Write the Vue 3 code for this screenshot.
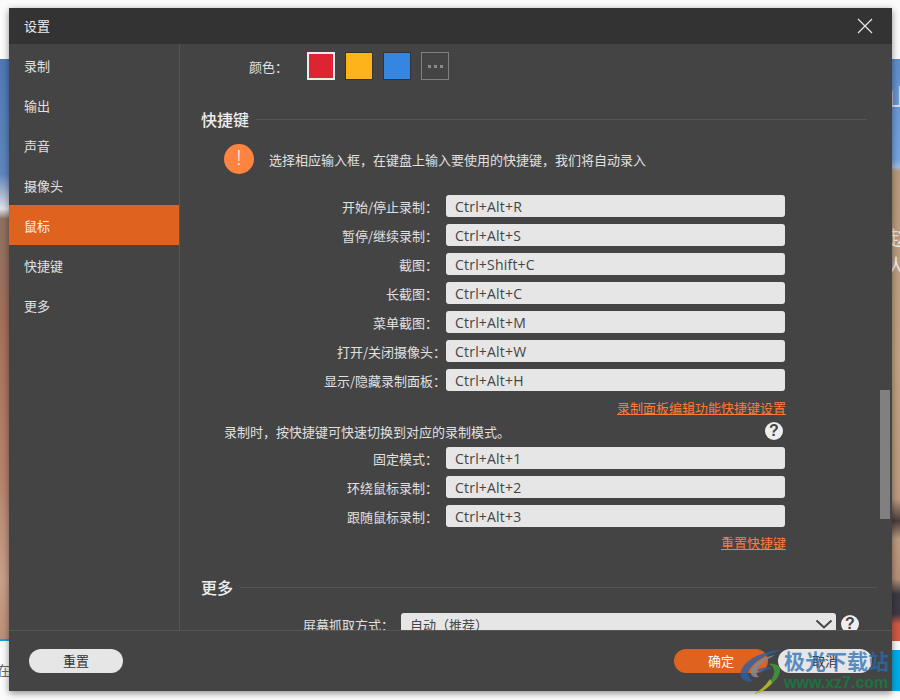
<script setup>
const navItems = ['录制', '输出', '声音', '摄像头', '鼠标', '快捷键', '更多']
const mainKeys = [
  { label: '开始/停止录制：', value: 'Ctrl+Alt+R' },
  { label: '暂停/继续录制：', value: 'Ctrl+Alt+S' },
  { label: '截图：', value: 'Ctrl+Shift+C' },
  { label: '长截图：', value: 'Ctrl+Alt+C' },
  { label: '菜单截图：', value: 'Ctrl+Alt+M' },
  { label: '打开/关闭摄像头：', value: 'Ctrl+Alt+W', wide: true },
  { label: '显示/隐藏录制面板：', value: 'Ctrl+Alt+H', wide: true }
]
const modeKeys = [
  { label: '固定模式：', value: 'Ctrl+Alt+1' },
  { label: '环绕鼠标录制：', value: 'Ctrl+Alt+2' },
  { label: '跟随鼠标录制：', value: 'Ctrl+Alt+3' }
]
</script>

<template>
  <div class="page">
    <div class="backdrop">
      <div class="photo-left"></div>
      <div class="photo-right"></div>
      <div class="bar-left"></div>
      <div class="bar-right"></div>
      <span class="bg-text bg-left">在</span>
      <span class="bg-text bg-r1">山</span>
      <span class="bg-text bg-r2">赵</span>
      <span class="bg-text bg-r3">人</span>
    </div>

    <div class="dialog">
      <header class="titlebar">
        <span>设置</span>
        <svg class="close" width="16" height="16" viewBox="0 0 16 16">
          <path d="M1 1 L15 15 M15 1 L1 15" stroke="#e8e8e8" stroke-width="1.2" fill="none" />
        </svg>
      </header>

      <div class="main">
        <nav class="sidebar">
          <div v-for="item in navItems" :key="item" class="nav-item" :class="{ active: item === '鼠标' }">{{ item }}</div>
        </nav>

        <section class="content">
          <div class="colors">
            <span class="colors-label">颜色：</span>
            <div class="swatches">
              <span class="swatch red"></span>
              <span class="swatch yellow"></span>
              <span class="swatch blue"></span>
              <span class="swatch more"><i></i><i></i><i></i></span>
            </div>
          </div>

          <div class="heading first"><span>快捷键</span><b></b></div>

          <div class="notice">
            <span class="alert">!</span>
            <span>选择相应输入框，在键盘上输入要使用的快捷键，我们将自动录入</span>
          </div>

          <div class="rows">
            <div v-for="k in mainKeys" :key="k.label" class="row">
              <label :class="{ wide: k.wide }">{{ k.label }}</label>
              <div class="field">{{ k.value }}</div>
            </div>
          </div>

          <div class="link-line link-a"><a>录制面板编辑功能快捷键设置</a></div>

          <div class="desc">
            <span>录制时，按快捷键可快速切换到对应的录制模式。</span>
            <span class="help">?</span>
          </div>

          <div class="rows modes">
            <div v-for="k in modeKeys" :key="k.label" class="row">
              <label>{{ k.label }}</label>
              <div class="field">{{ k.value }}</div>
            </div>
          </div>

          <div class="link-line link-b"><a>重置快捷键</a></div>

          <div class="heading second"><span>更多</span><b></b></div>

          <div class="select-row">
            <label>屏幕抓取方式：</label>
            <div class="select">
              <span>自动（推荐）</span>
              <svg width="18" height="10" viewBox="0 0 18 10">
                <path d="M1.5 1.5 L9 8.5 L16.5 1.5" stroke="#444" stroke-width="2" fill="none" />
              </svg>
            </div>
            <span class="help">?</span>
          </div>

          <div class="scrollbar"></div>
        </section>
      </div>

      <footer class="footer">
        <button class="btn light">重置</button>
        <div class="footer-right">
          <button class="btn primary">确定</button>
          <button class="btn light">取消</button>
        </div>
      </footer>
    </div>

    <div class="watermark">
      <svg class="wm-logo" width="50" height="48" viewBox="0 0 50 48">
        <path d="M44 2 C26 2 6 11 2 23 C0 31 7 35 14 33 C8 30 8 24 13 18 C20 10 32 5 44 2 Z" fill="#2a62a5" fill-opacity="0.8" />
        <path d="M36 7 C24 9 14 15 12 23 C11 28 15 30 20 29 C16 26 17 21 21 17 C25 13 31 10 36 7 Z" fill="#7d8a96" fill-opacity="0.9" />
        <path d="M18 22 C23 19 31 18 33 21 C29 21 25 22 22 25 Z" fill="#2a62a5" fill-opacity="0.8" />
        <path d="M30 16 C39 15 43 20 40 27 C36 35 26 42 15 46 C25 40 33 33 35 26 C36 21 34 18 30 16 Z" fill="#3f9a3a" fill-opacity="0.85" />
        <path d="M31 31 C27 37 22 42 15 46 C22 45 28 41 33 35 Z" fill="#b7b52a" fill-opacity="0.9" />
      </svg>
      <div class="wm-text">
        <span class="wm-cn">极光下载站</span>
        <span class="wm-en">www.xz7.com</span>
      </div>
    </div>
  </div>
</template>

<style scoped>
.page {
  position: relative;
  width: 900px;
  height: 700px;
  box-sizing: border-box;
  padding: 8px 8px 9px 9px;
  background: #fbfbfb;
  overflow: hidden;
  font-family: "Noto Sans CJK SC", "Liberation Sans", sans-serif;
  font-size: 13px;
}

.backdrop {
  position: absolute;
  inset: 0;
}
.photo-left {
  position: absolute;
  left: 0;
  top: 59px;
  width: 9px;
  height: 580px;
  background: linear-gradient(to bottom, #4f78b4 0, #5f86bf 115px, #a9b8d2 135px, #dfe3ea 150px, #8d7161 160px, #a3705c 260px, #b5836e 420px, #c9a08c 520px, #bd9078 580px);
}
.photo-right {
  position: absolute;
  left: 892px;
  top: 59px;
  width: 8px;
  height: 582px;
  background: linear-gradient(to bottom, #5f8cc8 0, #76a3e0 100px, #9dbbe0 108px, #b79a7c 112px, #c0a183 300px, #bb9a80 440px, #4a3d3c 462px, #bb9a80 480px, #b59078 520px, #3d3a44 535px, #3d3a44 555px, #cf5a45 565px, #cf5a45 582px);
}
.bar-left {
  position: absolute;
  left: 0;
  top: 639px;
  width: 9px;
  height: 2px;
  background: #10a5e0;
}
.bar-right {
  position: absolute;
  left: 892px;
  top: 650px;
  width: 8px;
  height: 41px;
  background: #00aee8;
}
.bg-text {
  position: absolute;
  line-height: 1;
}
.bg-left {
  left: -3px;
  top: 663px;
  color: #666;
  font-size: 13px;
}
.bg-r1 {
  left: 888px;
  top: 84px;
  color: #dfe6f2;
  font-size: 24px;
}
.bg-r2 {
  left: 888px;
  top: 228px;
  color: #f2ede8;
  font-size: 20px;
}
.bg-r3 {
  left: 886px;
  top: 256px;
  color: #f2ede8;
  font-size: 20px;
}

.dialog {
  position: relative;
  display: flex;
  flex-direction: column;
  height: 683px;
  background: #444;
  color: #e0e0e0;
  box-shadow: 0 2px 7px rgba(0, 0, 0, 0.45);
}

.titlebar {
  flex: none;
  display: flex;
  align-items: center;
  justify-content: space-between;
  box-sizing: border-box;
  height: 36px;
  padding: 0 19px 2px 15px;
  background: #333;
  color: #eee;
}
.close {
  display: block;
  margin-top: 2px;
}

.main {
  flex: 1;
  display: flex;
  min-height: 0;
}
.sidebar {
  flex: none;
  width: 170px;
  padding-top: 1px;
  border-right: 1px solid #555;
}
.nav-item {
  height: 40px;
  line-height: 41px;
  padding-left: 15px;
}
.nav-item.active {
  background: #df621f;
  color: #f4f4f4;
}

.content {
  position: relative;
  flex: 1;
  min-width: 0;
  padding: 8px 0 0 21px;
  overflow: hidden;
}

.colors {
  display: flex;
  align-items: center;
  height: 28px;
  padding-left: 48px;
}
.colors-label {
  width: 58px;
}
.swatches {
  display: flex;
  gap: 10px;
}
.swatch {
  box-sizing: border-box;
  display: flex;
  align-items: center;
  justify-content: center;
  gap: 3px;
  width: 28px;
  height: 28px;
  border: 1px solid #333;
}
.red {
  background: #dd2430;
  border: 2px solid #ececec;
}
.yellow {
  background: #ffb31a;
}
.blue {
  background: #3486e0;
}
.more {
  border: 1px solid #808080;
}
.more i {
  display: block;
  width: 3px;
  height: 3px;
  background: #888;
}

.heading {
  display: flex;
  align-items: center;
  gap: 7px;
  height: 24px;
  font-size: 16px;
  font-weight: 500;
  color: #eee;
}
.heading b {
  flex: 1;
  height: 1px;
  background: #555;
}
.heading.first {
  margin-top: 27px;
  margin-right: 25px;
}
.heading.second {
  margin-top: 23px;
  margin-right: 15px;
}

.notice {
  display: flex;
  align-items: center;
  gap: 15px;
  height: 30px;
  margin: 13px 0 0 23px;
}
.alert {
  width: 30px;
  height: 30px;
  border-radius: 50%;
  background: #ff8440;
  color: #fff;
  font-family: "Open Sans", sans-serif;
  font-size: 20px;
  font-weight: 300;
  line-height: 28px;
  text-align: center;
}

.rows {
  display: flex;
  flex-direction: column;
  gap: 7px;
  margin-top: 21px;
}
.rows.modes {
  margin-top: 7px;
}
.row {
  display: flex;
  align-items: center;
  height: 22px;
}
.row label {
  width: 237px;
  margin-right: 8px;
  text-align: right;
  white-space: nowrap;
}
.row label.wide {
  position: relative;
  left: 8px;
}
.field {
  box-sizing: border-box;
  width: 339px;
  height: 22px;
  line-height: 22px;
  padding: 1px 0 0 9px;
  border-radius: 3px;
  background: #e6e6e6;
  color: #444;
  font-family: "Open Sans", "Liberation Sans", sans-serif;
  font-size: 14px;
  letter-spacing: 0.2px;
}

.link-line {
  width: 585px;
  height: 18px;
  line-height: 18px;
  text-align: right;
}
.link-a {
  margin-top: 8px;
}
.link-b {
  margin-top: 7px;
}
.link-line a {
  color: #ff7b3a;
  text-decoration: underline;
}

.desc {
  display: flex;
  align-items: center;
  justify-content: space-between;
  width: 559px;
  height: 18px;
  margin: 5px 0 0 23px;
}
.help {
  flex: none;
  width: 18px;
  height: 18px;
  line-height: 18px;
  border-radius: 50%;
  background: #eee;
  color: #444;
  font-family: "Liberation Sans", sans-serif;
  font-size: 16px;
  font-weight: 700;
  text-align: center;
}

.select-row {
  display: flex;
  align-items: center;
  height: 22px;
  margin-top: 14px;
}
.select-row label {
  width: 193px;
  margin-right: 7px;
  text-align: right;
  white-space: nowrap;
}
.select {
  box-sizing: border-box;
  display: flex;
  align-items: center;
  justify-content: space-between;
  width: 435px;
  height: 22px;
  padding: 0 3px 0 9px;
  border-radius: 3px;
  background: #e6e6e6;
  color: #444;
}
.select-row .help {
  margin-left: 5px;
}

.scrollbar {
  position: absolute;
  right: 2px;
  top: 346px;
  width: 10px;
  height: 129px;
  background: #808080;
}

.footer {
  flex: none;
  display: flex;
  align-items: center;
  justify-content: space-between;
  box-sizing: border-box;
  height: 61px;
  padding: 0 20px;
  border-top: 1px solid #555;
}
.footer-right {
  display: flex;
  gap: 10px;
}
.btn {
  width: 94px;
  height: 24px;
  padding: 0;
  border: none;
  border-radius: 12px;
  font-family: inherit;
  font-size: 13px;
  line-height: 24px;
}
.btn.light {
  background: #e6e6e6;
  color: #333;
}
.btn.primary {
  background: #df621f;
  color: #fff;
}

.watermark {
  position: absolute;
  left: 739px;
  top: 648px;
  display: flex;
  pointer-events: none;
}
.wm-logo {
  flex: none;
}
.wm-text {
  display: flex;
  flex-direction: column;
  margin-left: -5px;
}
.wm-cn {
  font-size: 21px;
  line-height: 24px;
  font-weight: 700;
  color: rgba(38, 110, 180, 0.75);
  white-space: nowrap;
}
.wm-en {
  margin-top: 2px;
  font-family: "Liberation Sans", sans-serif;
  font-size: 16px;
  line-height: 18px;
  font-weight: 700;
  color: rgba(25, 120, 65, 0.9);
  white-space: nowrap;
}
</style>
